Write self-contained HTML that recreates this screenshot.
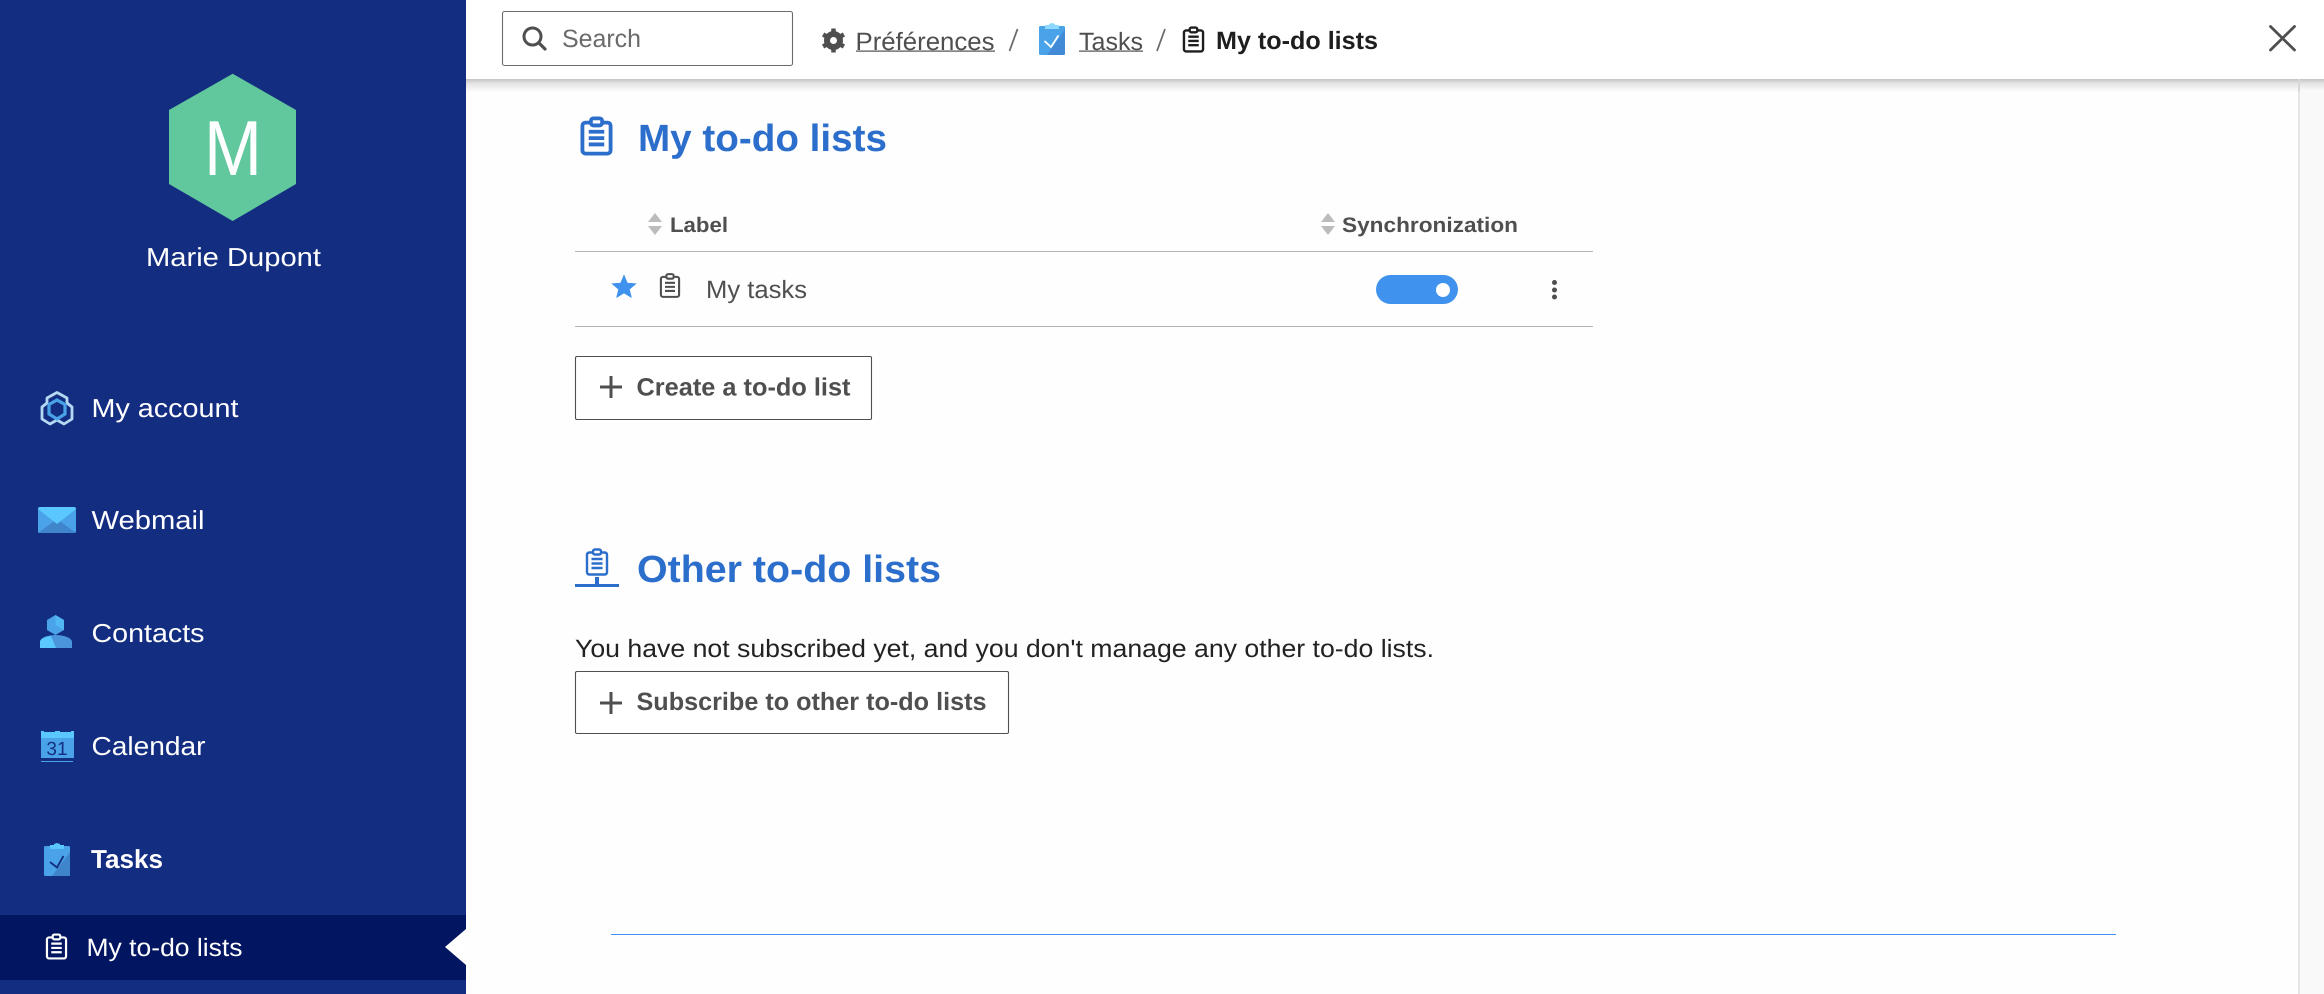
<!DOCTYPE html>
<html lang="en"><head><meta charset="utf-8"><title>My to-do lists</title>
<style>
html,body{margin:0;padding:0;background:#fefefe;width:2324px;height:994px;overflow:hidden}
svg{display:block}
text{font-family:"Liberation Sans",sans-serif;text-rendering:geometricPrecision}
</style></head><body>
<svg xmlns="http://www.w3.org/2000/svg" width="2324" height="994" viewBox="0 0 2324 994">
<defs>
<linearGradient id="sh" x1="0" y1="0" x2="0" y2="1"><stop offset="0" stop-color="#c4c4c4"/><stop offset=".35" stop-color="#e4e4e4"/><stop offset="1" stop-color="#fefefe"/></linearGradient>
<symbol id="clip" viewBox="0 0 22 27" overflow="visible">
<path d="M6.500 4H3.200C2 4 1 5 1 6.200V23.800C1 25 2 26 3.200 26H18.800C20 26 21 25 21 23.800V6.200C21 5 20 4 18.800 4H15.500" fill="none" stroke="currentColor"/>
<rect x="7" y="1" width="8" height="5" rx="1.800" fill="none" stroke="currentColor"/>
<path d="M5.500 10.500H16.500M5.500 15H16.500M5.500 19.500H16.500" fill="none" stroke="currentColor"/>
</symbol>
</defs>
<rect width="2324" height="994" fill="#fefefe"/>
<rect x="2298" y="0" width="26" height="994" fill="#f9f9f9"/>
<rect x="2298" y="0" width="2" height="994" fill="#e6e6e6"/>

<!-- sidebar -->
<rect width="466" height="994" fill="#132d80"/>
<polygon points="232.700,73.700 296,110 296,184 232.700,221 169,184 169,110" fill="#61c79d"/>
<text x="204" y="175" font-size="78" fill="#fff" textLength="58" lengthAdjust="spacingAndGlyphs">M</text>
<text x="146" y="266" font-size="26" fill="#fff" textLength="175" lengthAdjust="spacingAndGlyphs">Marie Dupont</text>

<path d="M57 392.500L67 398V403L72 407V419L64 424L57 420L50 424L42 419V407L47 403V398Z" fill="none" stroke="#b5d9f3" stroke-width="2.800" stroke-linejoin="round"/>
<polygon points="57,400 65,404.500 65,414 57,419 49,414 49,404.500" fill="none" stroke="#4aa3e8" stroke-width="3.200"/>
<text x="91.500" y="417" font-size="26" fill="#fff" textLength="147" lengthAdjust="spacingAndGlyphs">My account</text>

<rect x="38" y="507" width="38" height="26" rx="2" fill="#4aa3e8"/>
<path d="M38 533L57 519L76 533Z" fill="#3f85cc"/>
<path d="M38 509C38 508 39 507 40 507H74C75 507 76 508 76 509L57 524Z" fill="#5ac8ff"/>
<text x="91.500" y="529" font-size="26" fill="#fff" textLength="113" lengthAdjust="spacingAndGlyphs">Webmail</text>

<polygon points="55.500,615 64,620 64,630 55.500,635 47,630 47,620" fill="#4aa3e8"/>
<polygon points="55.500,615 64,620 64,630 55.500,625" fill="#5ac8ff" opacity=".55"/>
<path d="M40 648V642C40 638 47 635 55.500 635C64 635 72 638 72 642V648Z" fill="#4a95dc"/>
<path d="M40 648V642C40 639 44 637 51 636L56 648Z" fill="#5ac8ff"/>
<text x="91.500" y="642" font-size="26" fill="#fff" textLength="113" lengthAdjust="spacingAndGlyphs">Contacts</text>

<rect x="41" y="732" width="33" height="26" fill="#4aa3e8"/>
<path d="M41 731H44V732H55V731H60V732H71V731H74V738H41Z" fill="#5ac8ff"/>
<rect x="41" y="761" width="32" height="1" fill="#4aa3e8"/>
<text x="57" y="755" font-size="19" fill="#132d80" text-anchor="middle">31</text>
<text x="91.500" y="755" font-size="26" fill="#fff" textLength="114" lengthAdjust="spacingAndGlyphs">Calendar</text>

<rect x="44" y="846" width="26" height="30" rx="1.500" fill="#4aa3e8"/>
<path d="M70 852V875L69 876H52Z" fill="#3f85cc"/>
<path d="M50 845H54V844L57 843L60 844V845H64V849H50Z" fill="#5ac8ff"/>
<path d="M50 862L57 867.500L63.500 856" fill="none" stroke="#132d80" stroke-width="1.800"/>
<text x="91" y="868" font-size="26" font-weight="700" fill="#fff" textLength="72" lengthAdjust="spacingAndGlyphs">Tasks</text>

<rect x="0" y="915" width="466" height="65" fill="#021560"/>
<polygon points="445,947 466,929 466,965" fill="#fff"/>
<use href="#clip" x="46" y="933" width="21" height="27" color="#fff" stroke-width="2.300"/>
<text x="86.500" y="956" font-size="25" fill="#fff" textLength="156" lengthAdjust="spacingAndGlyphs">My to-do lists</text>

<!-- top bar -->
<rect x="466" y="79" width="1858" height="13" fill="url(#sh)"/>
<rect x="2298" y="79" width="2" height="13" fill="#d8d8d8"/>
<rect x="466" y="0" width="1858" height="79" fill="#fff"/>
<rect x="502.500" y="11.500" width="290" height="54" rx="2" fill="#fff" stroke="#6b6b6b" stroke-width="1.100"/>
<circle cx="532.500" cy="36.500" r="8.500" fill="none" stroke="#4f4f4f" stroke-width="3"/>
<path d="M539 43L545 49" stroke="#4f4f4f" stroke-width="3.200" stroke-linecap="round"/>
<text x="562" y="47" font-size="25" fill="#6b6b6b" textLength="79" lengthAdjust="spacingAndGlyphs">Search</text>

<circle cx="833.500" cy="40.500" r="6.500" fill="none" stroke="#4f4f4f" stroke-width="6"/>
<g stroke="#4f4f4f" stroke-width="4.500">
<path d="M833.500 28.500V34M833.500 47V52.500M823.100 34.500L828 37.300M839 43.700L843.900 46.500M823.100 46.500L828 43.700M839 37.300L843.900 34.500"/>
</g>
<text x="855.500" y="50" font-size="25" fill="#4f4f4f" textLength="139" lengthAdjust="spacingAndGlyphs">Préférences</text>
<rect x="856" y="50.500" width="139" height="1.200" fill="#4f4f4f"/>
<path d="M1009.500 51L1017.500 29" stroke="#6b6b6b" stroke-width="1.800"/>

<rect x="1039" y="26" width="26" height="29" rx="1.500" fill="#4aa3e8"/>
<path d="M1065 29V54L1064 55H1047Z" fill="#4289d6"/>
<path d="M1045 25H1049V24L1052 23L1055 24V25H1059V29H1045Z" fill="#8fd8ff"/>
<path d="M1044.500 41L1051 47L1058.500 35.500" fill="none" stroke="#fff" stroke-width="1.800"/>
<text x="1079" y="50" font-size="25" fill="#4f4f4f" textLength="64" lengthAdjust="spacingAndGlyphs">Tasks</text>
<rect x="1079" y="50.500" width="64" height="1.200" fill="#4f4f4f"/>
<path d="M1157 51L1165 29" stroke="#6b6b6b" stroke-width="1.800"/>
<use href="#clip" x="1183" y="26" width="21" height="27" color="#1e1e1e" stroke-width="2.500"/>
<text x="1216" y="49" font-size="25" font-weight="700" fill="#1e1e1e" textLength="162" lengthAdjust="spacingAndGlyphs">My to-do lists</text>
<path d="M2270.500 26.500L2294.500 50M2294.500 26.500L2270.500 50" stroke="#4f4f4f" stroke-width="2.800" stroke-linecap="round"/>

<!-- section 1 -->
<use href="#clip" x="581" y="116" width="31" height="40" color="#2c6ecb" stroke-width="2.700"/>
<text x="638" y="151" font-size="38" font-weight="700" fill="#2c6ecb" textLength="249" lengthAdjust="spacingAndGlyphs">My to-do lists</text>

<polygon points="655,213 662,222 648,222" fill="#bcbcbc"/>
<polygon points="655,235 662,226 648,226" fill="#bcbcbc"/>
<text x="670" y="232" font-size="21" font-weight="700" fill="#4f4f4f" textLength="58" lengthAdjust="spacingAndGlyphs">Label</text>
<polygon points="1328,213 1335,222 1321,222" fill="#bcbcbc"/>
<polygon points="1328,235 1335,226 1321,226" fill="#bcbcbc"/>
<text x="1342" y="232" font-size="21" font-weight="700" fill="#4f4f4f" textLength="176" lengthAdjust="spacingAndGlyphs">Synchronization</text>
<rect x="575" y="251" width="1018" height="1" fill="#b4b4b4"/>
<polygon points="624,275 627.300,283 636,283.700 629.400,289.300 631.400,297.500 624,293 616.600,297.500 618.600,289.300 612,283.700 620.700,283" fill="#3f92ee" stroke="#3f92ee" stroke-width=".6" stroke-linejoin="round"/>
<use href="#clip" x="660" y="272" width="20" height="27" color="#4f4f4f" stroke-width="2.300"/>
<text x="706" y="298" font-size="25" fill="#4f4f4f" textLength="101" lengthAdjust="spacingAndGlyphs">My tasks</text>
<rect x="1376" y="275" width="82" height="29" rx="14.500" fill="#3f92ee"/>
<circle cx="1443" cy="290" r="7" fill="#fff"/>
<circle cx="1554.500" cy="282.500" r="2.500" fill="#4f4f4f"/>
<circle cx="1554.500" cy="290" r="2.500" fill="#4f4f4f"/>
<circle cx="1554.500" cy="297" r="2.500" fill="#4f4f4f"/>
<rect x="575" y="326" width="1018" height="1" fill="#b4b4b4"/>

<rect x="575.500" y="356.500" width="296" height="63" rx="1.500" fill="#fff" stroke="#4f4f4f" stroke-width="1.100"/>
<path d="M600 387H622M611 376V398" stroke="#4f4f4f" stroke-width="3"/>
<text x="636.500" y="395.500" font-size="25" font-weight="700" fill="#4f4f4f" textLength="214" lengthAdjust="spacingAndGlyphs">Create a to-do list</text>

<!-- section 2 -->
<use href="#clip" x="586" y="547" width="22" height="30" color="#2c6ecb" stroke-width="2.400"/>
<rect x="575" y="584" width="44" height="3" fill="#2c6ecb"/>
<rect x="595" y="577" width="4" height="8" fill="#2c6ecb"/>
<text x="637" y="582" font-size="38" font-weight="700" fill="#2c6ecb" textLength="304" lengthAdjust="spacingAndGlyphs">Other to-do lists</text>
<text x="575" y="657" font-size="25" fill="#222" textLength="859" lengthAdjust="spacingAndGlyphs">You have not subscribed yet, and you don't manage any other to-do lists.</text>
<rect x="575.500" y="671.500" width="433" height="62" rx="1.500" fill="#fff" stroke="#4f4f4f" stroke-width="1.100"/>
<path d="M600 703H622M611 692V714" stroke="#4f4f4f" stroke-width="3"/>
<text x="636.500" y="710" font-size="25" font-weight="700" fill="#4f4f4f" textLength="350" lengthAdjust="spacingAndGlyphs">Subscribe to other to-do lists</text>

<rect x="611" y="934" width="1505" height="1" fill="#3f92ee"/>
</svg>
</body></html>
